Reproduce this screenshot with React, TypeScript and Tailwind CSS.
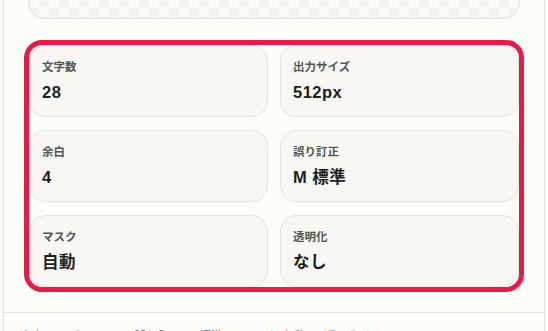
const stats = [
  { label: "文字数", value: "28" },
  { label: "出力サイズ", value: "512px" },
  { label: "余白", value: "4" },
  { label: "誤り訂正", value: "M 標準" },
  { label: "マスク", value: "自動" },
  { label: "透明化", value: "なし" },
];

const checker =
  "bg-[#fbfaf6] bg-[linear-gradient(45deg,#f4f3ee_25%,transparent_25%,transparent_75%,#f4f3ee_75%),linear-gradient(45deg,#f4f3ee_25%,transparent_25%,transparent_75%,#f4f3ee_75%)] bg-[length:20px_20px] bg-[position:0_0,10px_10px]";

export default function App() {
  return (
    <div
      className="h-[331px] w-[548px] overflow-hidden bg-[#fcfbf8] px-[3px]"
      style={{ fontFamily: '"Liberation Sans", "Noto Sans CJK JP", sans-serif' }}
    >
      <div className="-mt-[200px] border-x border-[#e4e2db] bg-[#fdfcf9]">
        {/* Preview */}
        <div className="px-6 pt-4">
          <div className={`h-[203px] rounded-2xl border border-[#e3e1d9] ${checker}`} />
        </div>

        {/* Stats */}
        <div className="px-5 pb-[20px] pt-[21px]">
          <div className="rounded-[18px] border-[5px] border-[#e31c4b]">
            <div className="grid grid-cols-2 gap-x-3 gap-y-[13px]">
              {stats.map((s) => (
                <div
                  key={s.label}
                  className="h-[72px] rounded-2xl border border-[#e5e3dc] bg-[#f8f7f3] px-3 pt-[13px]"
                >
                  <div className="text-[11.5px] font-bold leading-4 text-[#4f5754]">{s.label}</div>
                  <div className="mt-[5px] text-[16.5px] font-bold leading-6 tracking-[0.03em] text-[#1c2220]">
                    {s.value}
                  </div>
                </div>
              ))}
            </div>
          </div>
        </div>

        {/* Footer */}
        <div className="border-t border-[#e4e2db] pl-4 pr-5 pb-4 pt-[15px]">
          <p className="text-[12px] leading-[18px] text-[#5d6562]">
            出力サイズ 512px ・ 誤り訂正 M 標準 ・ マスク 自動 ・ 透明化 なし
          </p>
        </div>
      </div>
    </div>
  );
}
